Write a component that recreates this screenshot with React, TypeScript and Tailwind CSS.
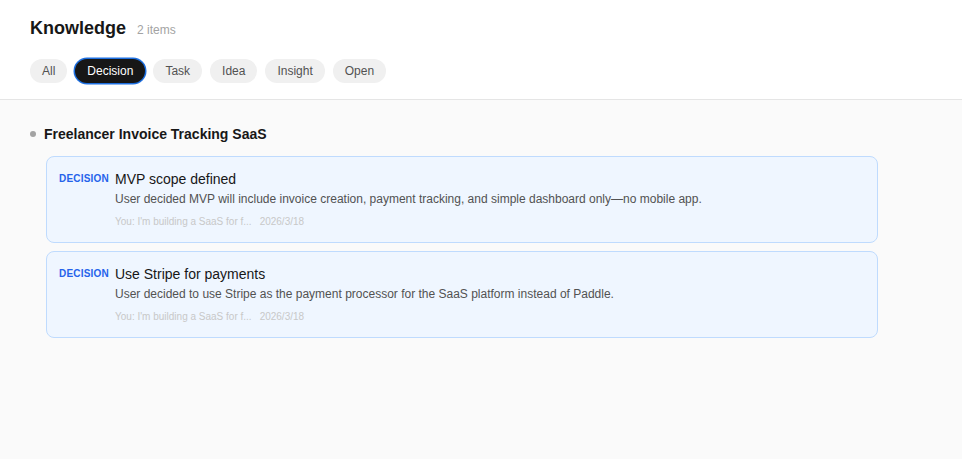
import React from "react";

const filters = ["All", "Decision", "Task", "Idea", "Insight", "Open"];

const items = [
  {
    title: "MVP scope defined",
    desc: "User decided MVP will include invoice creation, payment tracking, and simple dashboard only—no mobile app.",
  },
  {
    title: "Use Stripe for payments",
    desc: "User decided to use Stripe as the payment processor for the SaaS platform instead of Paddle.",
  },
];

export default function App() {
  return (
    <div
      className="w-[962px] h-[459px] bg-[#fafafa] overflow-hidden"
      style={{ fontFamily: '"Liberation Sans", Arial, Helvetica, sans-serif' }}
    >
      <div className="bg-white border-b border-[#e5e5e5] px-[30px] pt-[16px] pb-[16px]">
        <div className="flex items-baseline gap-[11px] h-[24px]">
          <h1 className="text-[18px] leading-[24px] font-bold text-[#171717]">Knowledge</h1>
          <span className="text-[12px] text-[#a3a3a3]">2 items</span>
        </div>
        <div className="flex gap-[8px] mt-[19px]">
          {filters.map((f) =>
            f === "Decision" ? (
              <button
                key={f}
                className="h-[24px] px-[12px] rounded-full bg-[#171717] text-white text-[12px] leading-[24px] ring-[1.5px] ring-[#1d6fe0]"
              >
                {f}
              </button>
            ) : (
              <button
                key={f}
                className="h-[24px] px-[12px] rounded-full bg-[#f0f0f0] text-[#525252] text-[12px] leading-[24px]"
              >
                {f}
              </button>
            )
          )}
        </div>
      </div>
      <div className="px-[30px] pt-[24px]">
        <div className="flex items-center gap-[8px] h-[20px]">
          <span className="w-[6px] h-[6px] rounded-full bg-[#a3a3a3]" />
          <span className="text-[14px] font-bold text-[#171717]">Freelancer Invoice Tracking SaaS</span>
        </div>
        <div className="ml-[16px] mt-[12px] w-[832px] flex flex-col gap-[8px]">
          {items.map((it) => (
            <div
              key={it.title}
              className="rounded-[8px] border border-[#bfdbfe] bg-[#eff6ff] px-[12px] pt-[12px] pb-[13px] flex gap-[8px]"
            >
              <div className="w-[48px] shrink-0 text-[10px] leading-[20px] font-bold text-[#2563eb] tracking-[0.02em]">
                DECISION
              </div>
              <div className="flex flex-col">
                <div className="text-[14px] leading-[20px] text-[#171717]">{it.title}</div>
                <div className="mt-[2px] text-[12px] leading-[16px] text-[#525252]">{it.desc}</div>
                <div className="mt-[8px] flex gap-[8px] text-[10px] leading-[14px] text-[#c8c8c8]">
                  <span>You: I'm building a SaaS for f...</span>
                  <span>2026/3/18</span>
                </div>
              </div>
            </div>
          ))}
        </div>
      </div>
    </div>
  );
}
